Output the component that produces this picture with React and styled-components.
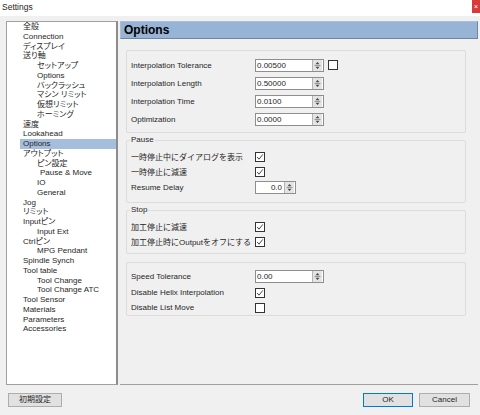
import styled, { createGlobalStyle } from "styled-components";

const GlobalStyle = createGlobalStyle`
  html, body {
    margin: 0;
    padding: 0;
    background: #f0f0f0;
  }
  body {
    font-family: "Liberation Sans", "Noto Sans CJK JP", sans-serif;
    font-size: 8px;
    color: #262626;
  }
`;

const treeItems = [
  ["全般", 13],
  ["Connection", 13],
  ["ディスプレイ", 13],
  ["送り軸", 13],
  ["セットアップ", 27],
  ["Options", 27],
  ["バックラッシュ", 27],
  ["マシン リミット", 27],
  ["仮想リミット", 27],
  ["ホーミング", 27],
  ["速度", 13],
  ["Lookahead", 13],
  ["Options", 13, true],
  ["アウトプット", 13],
  ["ピン設定", 27],
  ["Pause & Move", 30],
  ["IO", 27],
  ["General", 27],
  ["Jog", 13],
  ["リミット", 13],
  ["Inputピン", 13],
  ["Input Ext", 27],
  ["Ctrlピン", 13],
  ["MPG Pendant", 27],
  ["Spindle Synch", 13],
  ["Tool table", 13],
  ["Tool Change", 27],
  ["Tool Change ATC", 27],
  ["Tool Sensor", 13],
  ["Materials", 13],
  ["Parameters", 13],
  ["Accessories", 13],
];

function Spinner() {
  return (
    <SpinBox>
      <svg width="7" height="9" viewBox="0 0 7 9">
        <path d="M3.5 1 L5.5 3.2 L1.5 3.2 Z" fill="#444" />
        <line x1="0.5" y1="4.5" x2="6.5" y2="4.5" stroke="#9a9a9a" strokeWidth="1" />
        <path d="M1.5 5.8 L5.5 5.8 L3.5 8 Z" fill="#444" />
      </svg>
    </SpinBox>
  );
}

function NumberField({ value, width = 69, right }) {
  return (
    <Field $width={width}>
      <FieldValue $right={right}>{value}</FieldValue>
      <Spinner />
    </Field>
  );
}

function Check({ checked }) {
  return (
    <CheckBox>
      {checked && (
        <svg width="8" height="8" viewBox="0 0 8 8">
          <path d="M1.2 4 L3 6.2 L6.8 1.4" fill="none" stroke="#333" strokeWidth="0.9" />
        </svg>
      )}
    </CheckBox>
  );
}

export default function App() {
  return (
    <Window>
      <GlobalStyle />
      <TitleBar>
        <Title>Settings</Title>
        <CloseButton>×</CloseButton>
      </TitleBar>
      <Body>
        <Tree>
          {treeItems.map(([label, indent, selected], i) => (
            <TreeItem key={i} $indent={indent} $selected={selected}>
              {label}
            </TreeItem>
          ))}
        </Tree>
        <Content>
          <Header>Options</Header>
          <Pane>
            <Group $mt={11} $pt={5} $pb={4}>
              <Row $h={18}>
                <Label>Interpolation Tolerance</Label>
                <NumberField value="0.00500" />
                <Gap />
                <Check />
              </Row>
              <Row $h={18}>
                <Label>Interpolation Length</Label>
                <NumberField value="0.50000" />
              </Row>
              <Row $h={18}>
                <Label>Interpolation Time</Label>
                <NumberField value="0.0100" />
              </Row>
              <Row $h={18}>
                <Label>Optimization</Label>
                <NumberField value="0.0000" />
              </Row>
            </Group>

            <Group $mt={2} $pt={4} $pb={6}>
              <Legend>Pause</Legend>
              <Row $h={15}>
                <Label>一時停止中にダイアログを表示</Label>
                <Check checked />
              </Row>
              <Row $h={15}>
                <Label>一時停止に減速</Label>
                <Check checked />
              </Row>
              <Row $h={17}>
                <Label>Resume Delay</Label>
                <NumberField value="0.0" width={41} right />
              </Row>
            </Group>

            <Group $mt={2} $pt={4} $pb={4}>
              <Legend>Stop</Legend>
              <Row $h={15}>
                <Label>加工停止に減速</Label>
                <Check checked />
              </Row>
              <Row $h={15}>
                <Label>加工停止時にOutputをオフにする</Label>
                <Check checked />
              </Row>
            </Group>

            <Group $mt={8} $pt={5} $pb={0}>
              <Row $h={17}>
                <Label>Speed Tolerance</Label>
                <NumberField value="0.00" />
              </Row>
              <Row $h={15}>
                <Label>Disable Helix Interpolation</Label>
                <Check checked />
              </Row>
              <Row $h={15}>
                <Label>Disable List Move</Label>
                <Check />
              </Row>
            </Group>
          </Pane>
        </Content>
      </Body>
      <Footer>
        <Button $width={54}>初期設定</Button>
        <Buttons>
          <Button $width={50} $primary>OK</Button>
          <Button $width={51}>Cancel</Button>
        </Buttons>
      </Footer>
    </Window>
  );
}

const Window = styled.div`
  width: 480px;
  height: 415px;
  display: flex;
  flex-direction: column;
  background: #f0f0f0;
  overflow: hidden;
`;

const TitleBar = styled.div`
  height: 16px;
  flex: none;
  background: #fff;
  display: flex;
  justify-content: space-between;
  align-items: flex-start;
`;

const Title = styled.div`
  padding-left: 2px;
  line-height: 14px;
  font-size: 8.5px;
`;

const CloseButton = styled.div`
  width: 8px;
  height: 13px;
  background: #d8393b;
  color: #fff;
  font-size: 7px;
  line-height: 13px;
  text-align: center;
`;

const Body = styled.div`
  height: 369px;
  flex: none;
  box-sizing: border-box;
  padding: 5px 2px 0 6px;
  display: flex;
  gap: 2px;
`;

const Tree = styled.div`
  width: 112px;
  height: 364px;
  box-sizing: border-box;
  background: #fff;
  border: 1px solid #a0a0a0;
  border-right: 2px solid #8c8c8c;
  overflow: hidden;
`;

const TreeItem = styled.div`
  height: 9.75px;
  line-height: 9.75px;
  margin-left: ${(p) => p.$indent}px;
  padding-left: 3px;
  white-space: nowrap;
  font-feature-settings: "palt";
  background: ${(p) => (p.$selected ? "#a5bedd" : "transparent")};
`;

const Content = styled.div`
  flex: 1;
  display: flex;
  flex-direction: column;
  min-width: 0;
`;

const Header = styled.div`
  height: 18px;
  box-sizing: border-box;
  background: #97b3d6;
  border: 1px solid;
  border-color: #a9bfdb #6f86a3 #6f86a3 #a9bfdb;
  padding-left: 3px;
  font-size: 12px;
  font-weight: bold;
  line-height: 16px;
  color: #000;
`;

const Pane = styled.div`
  flex: 1;
  padding: 0 12px 0 6px;
  border-bottom: 1px solid #a0a0a0;
  overflow: hidden;
`;

const Group = styled.fieldset`
  margin: ${(p) => p.$mt}px 0 0 0;
  padding: ${(p) => p.$pt}px 0 ${(p) => p.$pb}px 4px;
  border: 1px solid #dcdcdc;
  border-radius: 2px;
  min-width: 0;
`;

const Legend = styled.legend`
  padding: 0 1px;
  margin-left: -1px;
  line-height: 10px;
  font-size: 8px;
`;

const Row = styled.div`
  height: ${(p) => p.$h}px;
  display: flex;
  align-items: center;
`;

const Label = styled.div`
  width: 124px;
  flex: none;
  white-space: nowrap;
`;

const Field = styled.div`
  width: ${(p) => p.$width}px;
  height: 13px;
  box-sizing: border-box;
  display: flex;
  align-items: stretch;
  background: #fff;
  border: 1px solid #8e8e8e;
`;

const FieldValue = styled.div`
  flex: 1;
  padding: 0 2px 0 1px;
  line-height: 11px;
  text-align: ${(p) => (p.$right ? "right" : "left")};
`;

const SpinBox = styled.div`
  width: 9px;
  margin: 0 1px 0 0;
  display: flex;
  align-items: center;
  justify-content: center;
  background: #e4e4e4;
  border-left: 1px solid #b4b4b4;
`;

const Gap = styled.div`
  width: 4px;
`;

const CheckBox = styled.div`
  width: 10px;
  height: 10px;
  box-sizing: border-box;
  border: 1px solid #333;
  background: #fff;
  display: flex;
  align-items: center;
  justify-content: center;
`;

const Footer = styled.div`
  flex: 1;
  display: flex;
  justify-content: space-between;
  align-items: flex-start;
  padding: 8px 10px 0 8px;
`;

const Buttons = styled.div`
  display: flex;
  gap: 6px;
`;

const Button = styled.div`
  width: ${(p) => p.$width}px;
  height: 14px;
  box-sizing: border-box;
  background: #e1e1e1;
  border: 1px solid ${(p) => (p.$primary ? "#0078d7" : "#adadad")};
  text-align: center;
  line-height: 12px;
  font-size: 8px;
`;
